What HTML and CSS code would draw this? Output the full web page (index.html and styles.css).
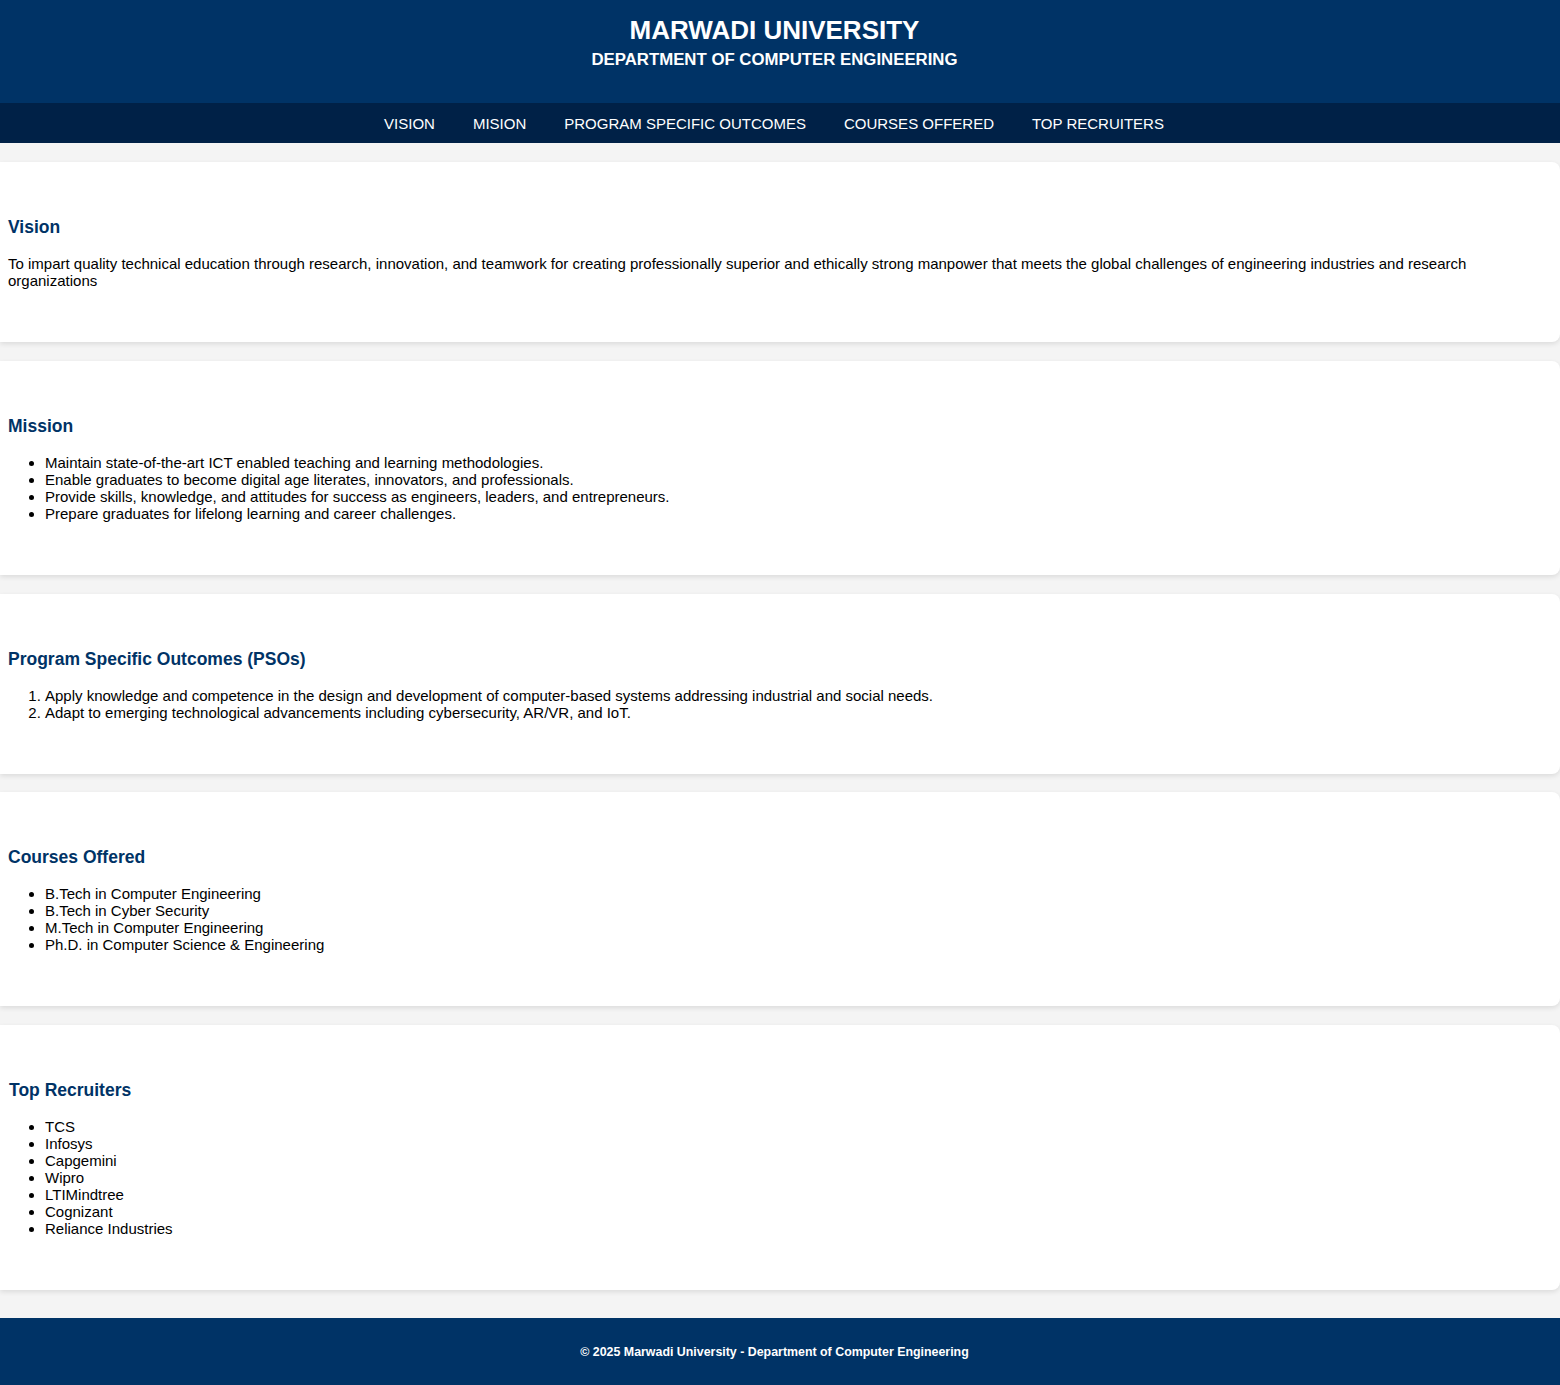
FILE: index.html
```html
<!DOCTYPE html>
<html lang="en">
<head>
<meta charset="utf-8">
<title>Marwadi University - Department of Computer Engineering</title>
<link rel="stylesheet" href="styles.css">
</head>
<body>
<header class="site-header">
  <h1 class="title">MARWADI UNIVERSITY</h1>
  <h2 class="subtitle">DEPARTMENT OF COMPUTER ENGINEERING</h2>
</header>
<nav class="site-nav">
  <a href="#vision">VISION</a>
  <a href="#mission">MISION</a>
  <a href="#pso">PROGRAM SPECIFIC OUTCOMES</a>
  <a href="#courses">COURSES OFFERED</a>
  <a href="#recruiters">TOP RECRUITERS</a>
</nav>
<main class="content">
  <section class="card" id="vision">
    <h2 class="card-title">Vision</h2>
    <p class="card-text">To impart quality technical education through research, innovation, and teamwork for creating professionally superior and ethically strong manpower that meets the global challenges of engineering industries and research organizations</p>
  </section>
  <section class="card" id="mission">
    <h2 class="card-title">Mission</h2>
    <ul class="card-list">
      <li>Maintain state-of-the-art ICT enabled teaching and learning methodologies.</li>
      <li>Enable graduates to become digital age literates, innovators, and professionals.</li>
      <li>Provide skills, knowledge, and attitudes for success as engineers, leaders, and entrepreneurs.</li>
      <li>Prepare graduates for lifelong learning and career challenges.</li>
    </ul>
  </section>
  <section class="card" id="pso">
    <h2 class="card-title">Program Specific Outcomes (PSOs)</h2>
    <ol class="card-list">
      <li>Apply knowledge and competence in the design and development of computer-based systems addressing industrial and social needs.</li>
      <li>Adapt to emerging technological advancements including cybersecurity, AR/VR, and IoT.</li>
    </ol>
  </section>
  <section class="card" id="courses">
    <h2 class="card-title">Courses Offered</h2>
    <ul class="card-list">
      <li>B.Tech in Computer Engineering</li>
      <li>B.Tech in Cyber Security</li>
      <li>M.Tech in Computer Engineering</li>
      <li>Ph.D. in Computer Science &amp; Engineering</li>
    </ul>
  </section>
  <section class="card card-shift" id="recruiters">
    <h2 class="card-title">Top Recruiters</h2>
    <ul class="card-list">
      <li>TCS</li>
      <li>Infosys</li>
      <li>Capgemini</li>
      <li>Wipro</li>
      <li>LTIMindtree</li>
      <li>Cognizant</li>
      <li>Reliance Industries</li>
    </ul>
  </section>
</main>
<footer class="site-footer">
  <p class="footer-text">&copy; 2025 Marwadi University - Department of Computer Engineering</p>
</footer>
</body>
</html>
```
FILE: styles.css
```css
html, body {
  margin: 0;
  padding: 0;
}
body {
  background: #f4f4f4;
  font-family: "Liberation Sans", Arial, sans-serif;
  font-size: 15px;
  line-height: 17px;
  color: #000;
}
.site-header {
  background: #003366;
  color: #fff;
  text-align: center;
  padding: 15px 11px 34px 0;
}
.title {
  margin: 0;
  font-size: 26px;
  line-height: 30px;
  font-weight: bold;
}
.subtitle {
  margin: 5px 0 0;
  font-size: 16.8px;
  line-height: 19px;
  font-weight: bold;
}
.site-nav {
  background: #002147;
  height: 39px;
  padding: 1px 12px 0 0;
  display: flex;
  justify-content: center;
  align-items: center;
  gap: 38px;
}
.site-nav a {
  color: #fff;
  text-decoration: none;
  font-size: 15px;
  line-height: 39px;
}
.content {
  display: flex;
  flex-direction: column;
  gap: 18.75px;
  padding: 19px 0 28px;
}
.card {
  background: #fff;
  border-radius: 0 8px 8px 0;
  box-shadow: 0 2px 5px rgba(0, 0, 0, 0.1);
  padding: 36px 8px;
}
.card-shift {
  padding-left: 9px;
}
.card-shift .card-list {
  padding-left: 36px;
}
.card-title {
  margin: 0 0 17px;
  padding-top: 19px;
  font-size: 17.5px;
  line-height: 21px;
  color: #003366;
  font-weight: bold;
}
.card-text {
  margin: 0 0 17px;
}
.card-list {
  margin: 0 0 17px;
  padding-left: 37px;
}
.site-footer {
  background: #003366;
  color: #fff;
  text-align: center;
  padding: 26px 11px 27px 0;
}
.footer-text {
  margin: 0;
  font-size: 12.4px;
  line-height: 16px;
  font-weight: bold;
}
```
